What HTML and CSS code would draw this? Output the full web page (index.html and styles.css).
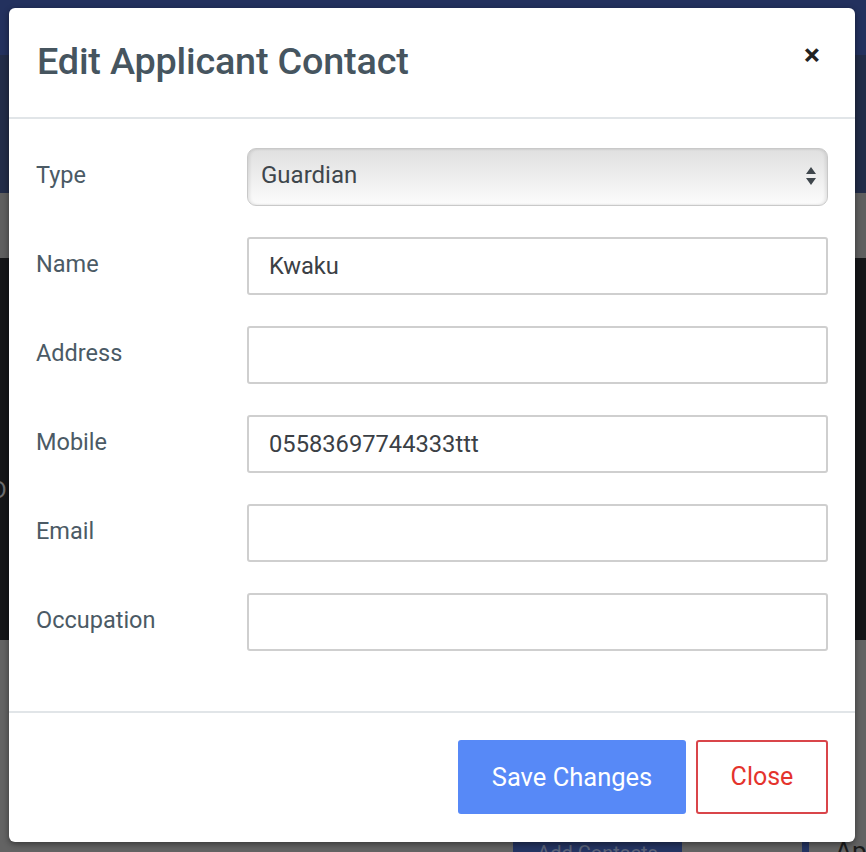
FILE: index.html
```html
<!DOCTYPE html>
<html>
<head>
<meta charset="utf-8">
<link rel="stylesheet" href="styles.css">
</head>
<body>
<div class="page">
  <div class="band band-nav"></div>
  <div class="band band-sub"></div>
  <div class="band band-gray"></div>
  <div class="band band-dark"><span class="edge-letter">D</span></div>
  <div class="band band-foot">
    <div class="foot-row">
      <span class="add-btn">Add Contacts</span>
      <span class="navy-strip"></span>
      <span class="ap-text">Ap</span>
    </div>
  </div>
</div>

<div class="modal">
  <div class="modal-header">
    <h4 class="modal-title">Edit Applicant Contact</h4>
    <span class="close-x">&times;</span>
  </div>
  <div class="modal-body">
    <div class="row">
      <label class="lbl">Type</label>
      <div class="select">
        <span>Guardian</span>
        <svg class="arrows" width="12" height="22" viewBox="0 0 12 22"><path d="M6 2 L11 9 L1 9 Z M1 13 L11 13 L6 20 Z" fill="#3f464c"/></svg>
      </div>
    </div>
    <div class="row">
      <label class="lbl">Name</label>
      <div class="input">Kwaku</div>
    </div>
    <div class="row">
      <label class="lbl">Address</label>
      <div class="input"></div>
    </div>
    <div class="row">
      <label class="lbl">Mobile</label>
      <div class="input">05583697744333ttt</div>
    </div>
    <div class="row">
      <label class="lbl">Email</label>
      <div class="input"></div>
    </div>
    <div class="row">
      <label class="lbl">Occupation</label>
      <div class="input"></div>
    </div>
  </div>
  <div class="modal-footer">
    <button class="btn btn-save">Save Changes</button>
    <button class="btn btn-close">Close</button>
  </div>
</div>
</body>
</html>
```
FILE: styles.css
```css
* { box-sizing: border-box; }
html, body { margin: 0; padding: 0; }
body {
  width: 866px;
  height: 852px;
  overflow: hidden;
  position: relative;
  font-family: Roboto, "Liberation Sans", sans-serif;
  background: #636363;
}
.page { display: flex; flex-direction: column; height: 852px; }
.band { flex: none; }
.band-nav { height: 55px; background: #23315e; }
.band-sub { height: 138px; background: #222c48; }
.band-gray { height: 65px; background: #5f5f5f; }
.band-dark { height: 382px; background: #151618; display: flex; align-items: center; }
.edge-letter {
  font-size: 24px; color: #6e6e6e; margin-left: -9px; margin-top: 82px;
}
.band-foot { flex: 1; background: #636363; display: flex; flex-direction: column; justify-content: flex-end; }
.foot-row { display: flex; align-items: flex-start; height: 10px; overflow: visible; }
.add-btn {
  margin-left: 513px; width: 172px; height: 14px; background: #243462;
  color: #5a6278; font-size: 20px; line-height: 22px; text-align: center; overflow: hidden;
}
.navy-strip { margin-left: 120px; width: 7px; height: 14px; background: #243462; }
.ap-text { margin-left: 26px; font-size: 26px; color: #1b1b1b; line-height: 14px; height: 14px; overflow: hidden; display: block; padding-top: 2px; }

.modal {
  position: absolute;
  top: 8px; left: 9px;
  width: 846px; height: 834px;
  background: #fff;
  border-radius: 6px;
  box-shadow: 0 2px 6px rgba(0,0,0,0.45);
  display: flex; flex-direction: column;
}
.modal-header {
  height: 111px;
  border-bottom: 2px solid #e1e5e8;
  display: flex; align-items: center; justify-content: space-between;
  padding: 0 35px 0 28px;
}
.modal-title {
  margin: 0; font-size: 37.8px; font-weight: 500; color: #46555f;
  letter-spacing: -0.2px; margin-top: -4px;
}
.close-x { font-size: 30px; font-weight: 700; color: #222; line-height: 1; margin-top: -16px; }
.modal-body { padding: 29px 27px 28px 28px; flex: 1; }
.row { display: grid; grid-template-columns: 210px 1fr; align-items: center; margin-bottom: 31px; }
.lbl { font-size: 23.5px; color: #4b5a65; margin-top: -4px; margin-left: -1px; }
.select {
  height: 58px;
  border: 1.5px solid #c9c9c9;
  border-radius: 9px;
  background: linear-gradient(#e0e0e0, #eeeeee 50%, #fcfcfc);
  box-shadow: inset 2px 0 3px rgba(0,0,0,0.08), inset -2px 0 3px rgba(0,0,0,0.08);
  display: flex; align-items: center; justify-content: space-between;
  padding: 0 10px 0 13px;
  font-size: 24px; color: #3e464c;
}
.select span { margin-top: -4px; }
.arrows { margin-top: -2px; }
.input {
  height: 58px;
  border: 2px solid #cfcfcf;
  border-radius: 3px;
  padding: 0 20px;
  display: flex; align-items: center;
  font-size: 23.7px; color: #3b4045;
}
.modal-footer {
  height: 131px;
  border-top: 2px solid #e1e5e8;
  display: flex; align-items: center; justify-content: flex-end;
  padding: 0 27px 0 0; gap: 10px;
}
.btn {
  height: 74px; font-family: Roboto, "Liberation Sans", sans-serif; font-size: 25.5px;
  border-radius: 3px; cursor: pointer; margin-top: -2px;
}
.btn-save { width: 228px; background: #5789f7; color: #fff; border: none; }
.btn-close { width: 132px; background: #fff; color: #e4332c; border: 2px solid #d9454a; font-size: 25px; }
```
